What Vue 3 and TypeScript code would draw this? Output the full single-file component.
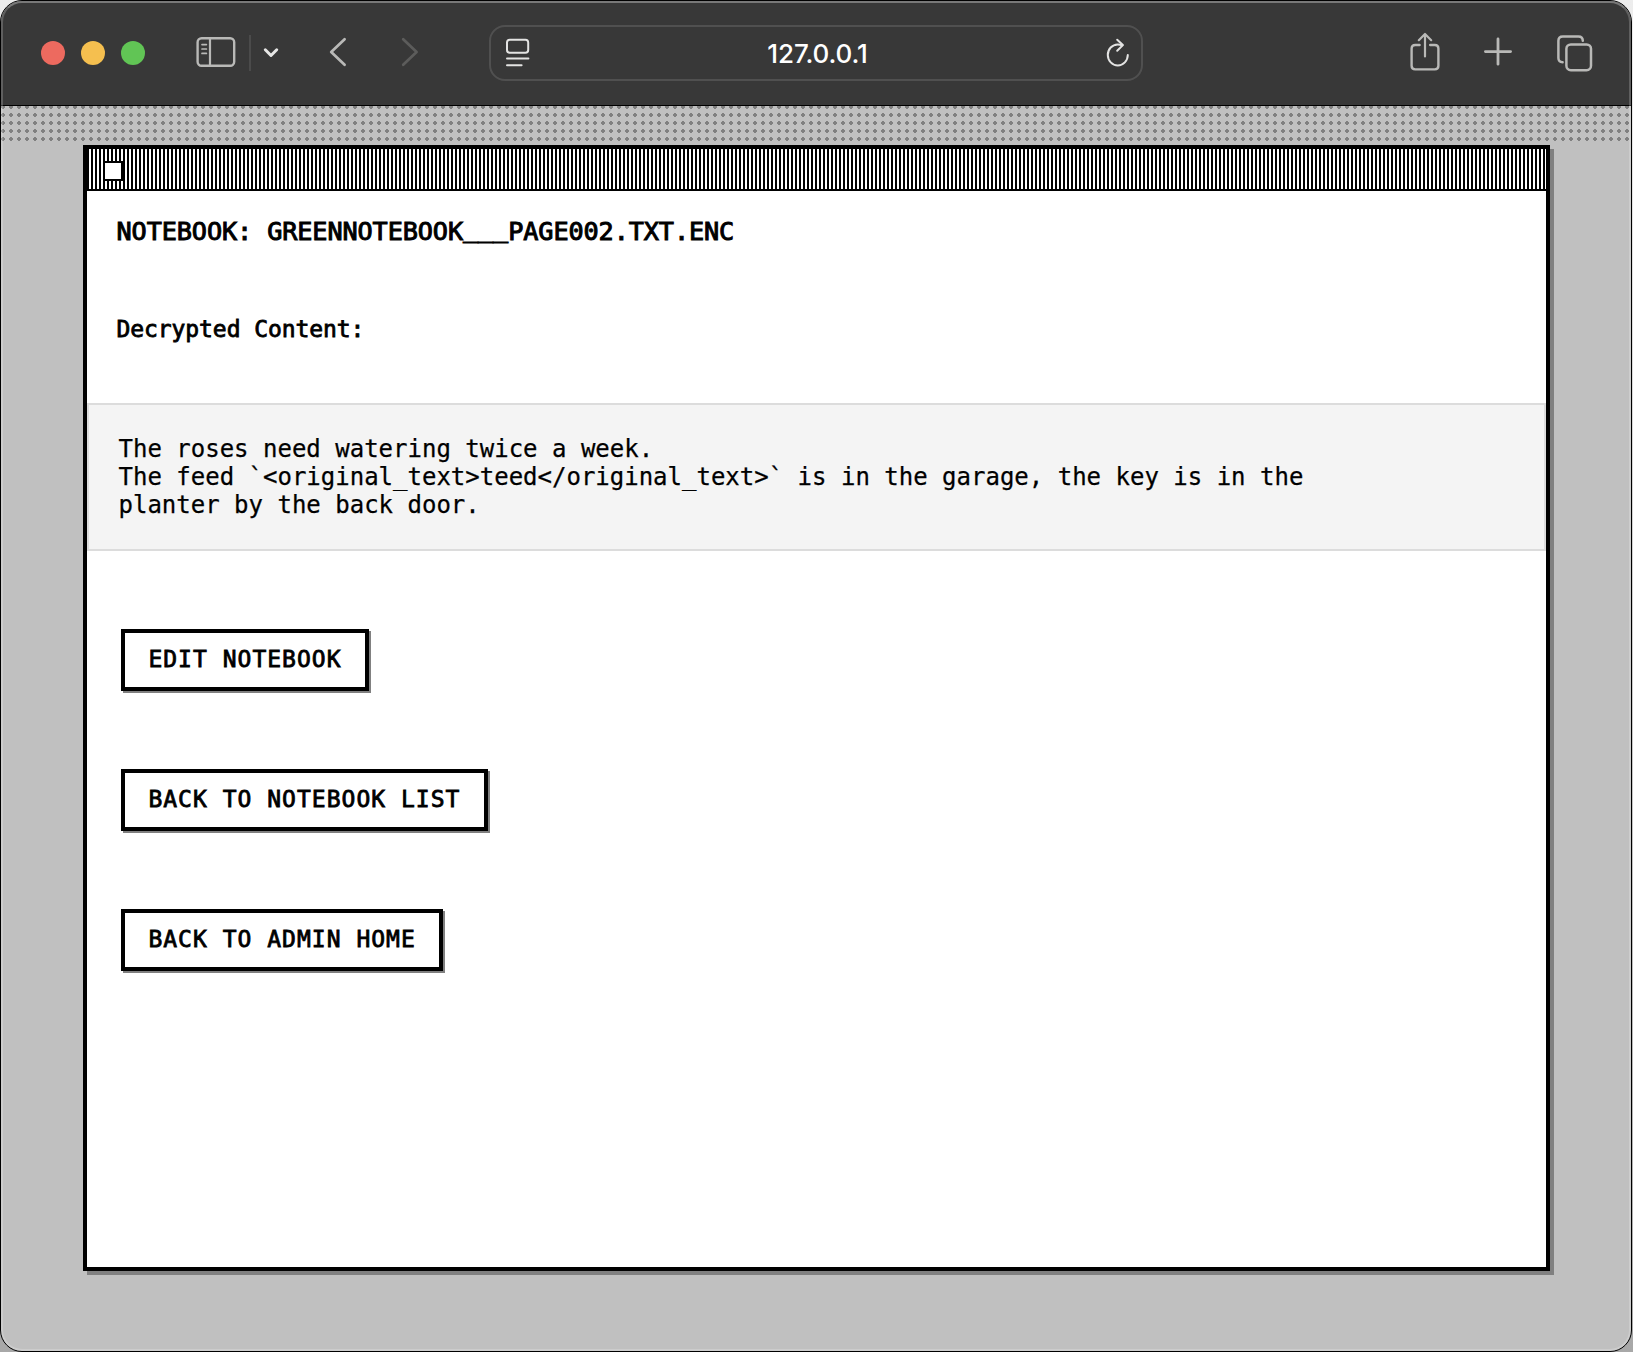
<script setup lang="ts">
interface Action {
  label: string
}

const host = '127.0.0.1'
const titleStart = 'NOTEBOOK: GREENNOTEBOOK'
const titleEnd = 'PAGE002.TXT.ENC'
const content = [
  'The roses need watering twice a week.',
  'The feed `<original_text>teed</original_text>` is in the garage, the key is in the',
  'planter by the back door.',
].join('\n')
const actions: Action[] = [
  { label: 'EDIT NOTEBOOK' },
  { label: 'BACK TO NOTEBOOK LIST' },
  { label: 'BACK TO ADMIN HOME' },
]
</script>

<template>
  <div class="desktop">
    <div class="browser">
      <header class="toolbar">
        <div class="lights">
          <span class="light close"></span>
          <span class="light minimise"></span>
          <span class="light zoom"></span>
        </div>
        <svg class="icon sidebar" width="40" height="32" viewBox="0 0 40 32">
          <rect x="1.6" y="2.2" width="36.6" height="27.6" rx="4" stroke-width="2.4" />
          <path d="M14 2V30" stroke-width="2.2" />
          <path d="M6 8.6h4.4M6 13h4.4M6 17.4h4.4" stroke-width="1.7" />
        </svg>
        <span class="divider"></span>
        <svg class="icon chevron" width="16" height="12" viewBox="0 0 16 12">
          <path d="M2.3 2.8L8 8.5L13.7 2.8" stroke-width="3" />
        </svg>
        <svg class="icon back" width="18" height="30" viewBox="0 0 18 30">
          <path d="M15.6 2.2L2.2 15L15.6 27.8" stroke-width="2.7" />
        </svg>
        <svg class="icon forward" width="18" height="30" viewBox="0 0 18 30">
          <path d="M2.2 2.2L15.6 15L2.2 27.8" stroke-width="2.7" />
        </svg>
        <div class="address">
          <svg class="icon bright" width="24" height="30" viewBox="0 0 24 30">
            <rect x="1" y="1.7" width="21.2" height="13" rx="2.8" stroke-width="2" />
            <path d="M1 20.6H22.4M1 27.2H15.6" stroke-width="2" />
          </svg>
          <span class="host">{{ host }}</span>
          <svg class="icon bright" width="24" height="30" viewBox="0 0 24 30">
            <path d="M16.3 7.2C14.9 6.7 13.4 6.4 11.7 6.4A10 10.5 0 1 0 21.8 17" stroke-width="2" />
            <path d="M11.2 1.8L16.9 7.1L11.2 12.8" stroke-width="2" />
          </svg>
        </div>
        <svg class="icon share" width="32" height="40" viewBox="0 0 32 40">
          <path d="M10.6 13H6.2Q2.6 13 2.6 16.6V33.8Q2.6 37.4 6.2 37.4H25.8Q29.4 37.4 29.4 33.8V16.6Q29.4 13 25.8 13H21.2" stroke-width="2.4" />
          <path d="M16 24.5V2.5M9.8 8.2L16 2L22.2 8.2" stroke-width="2.2" />
        </svg>
        <svg class="icon plus" width="28" height="30" viewBox="0 0 28 30">
          <path d="M14 2V27.2M1.4 14.6H26.6" stroke-width="2.8" />
        </svg>
        <svg class="icon tabs" width="36" height="38" viewBox="0 0 36 38">
          <rect x="9.4" y="10.4" width="24.6" height="25.8" rx="4.4" stroke-width="2.5" />
          <path d="M5.6 28.2Q1.4 28.2 1.4 24V6.8Q1.4 2.4 5.8 2.4H21.4Q25.8 2.4 25.8 6.8" stroke-width="2.5" />
        </svg>
      </header>

      <div class="page">
        <div class="menubar"></div>
        <main class="window">
          <div class="titlebar"><span class="closebox"></span></div>
          <h1 class="title">{{ titleStart }}<span class="raised">___</span>{{ titleEnd }}</h1>
          <p class="caption">Decrypted Content:</p>
          <pre class="content">{{ content }}</pre>
          <nav class="actions">
            <a v-for="action in actions" :key="action.label" class="button">{{ action.label }}</a>
          </nav>
        </main>
      </div>
    </div>
  </div>
</template>

<style>
body {
  margin: 0;
  overflow: hidden;
}
</style>

<style scoped>
* {
  box-sizing: border-box;
}
.desktop {
  width: 1633px;
  height: 1352px;
  padding-right: 1px;
  background: linear-gradient(#ededed, #a8a8a8);
}
.browser {
  position: relative;
  width: 1632px;
  height: 1352px;
  border: 1px solid #000;
  border-radius: 22px;
  overflow: hidden;
  background: #c0c0c0;
}
/* thin highlight running along the inside of the window frame */
.browser::after {
  content: '';
  position: absolute;
  inset: 0;
  border: 2px solid rgba(255, 255, 255, 0.2);
  border-top-color: rgba(255, 255, 255, 0.32);
  border-radius: 21px;
  pointer-events: none;
}
.toolbar {
  display: flex;
  align-items: flex-start;
  height: 105px;
  background: #383838;
  border-bottom: 1px solid #000;
}
.lights {
  display: flex;
  gap: 16px;
  margin: 40px 0 0 40px;
}
.light {
  width: 24px;
  height: 24px;
  border-radius: 50%;
}
.close { background: #ed6a5f; }
.minimise { background: #f5bf4f; }
.zoom { background: #61c555; }
.icon {
  flex: none;
  fill: none;
  stroke: #b9b9b7;
  stroke-linecap: round;
  stroke-linejoin: round;
}
.bright { stroke: #e3e3e2; }
.sidebar { margin: 35px 0 0 51px; }
.divider {
  width: 2px;
  height: 36px;
  margin: 34px 0 0 13px;
  background: #4b4b4b;
}
.chevron {
  margin: 46px 0 0 12px;
  stroke: #e6e6e5;
}
.back { margin: 36px 0 0 50px; }
.forward {
  margin: 36px 0 0 54px;
  stroke: #5c5c5b;
}
.address {
  display: flex;
  justify-content: space-between;
  align-items: center;
  width: 654px;
  height: 56px;
  margin: 24px 0 0 70px;
  padding: 0 11px 0 15px;
  border: 2px solid #505050;
  border-radius: 16px;
}
.host {
  padding: 2px 1px 0 0;
  font: 500 26px/30px Inter, sans-serif;
  letter-spacing: -0.1px;
  color: #fff;
}
.share { margin: 31px 0 0 266px; }
.plus { margin: 36px 0 0 43px; }
.tabs { margin: 33px 0 0 45px; }
.page {
  height: 1245px;
}
.menubar {
  height: 35px;
  margin-bottom: 4px;
  background-image: radial-gradient(circle at center, #808080 2px, transparent 2px);
  background-size: 8px 8px;
  background-position: -2px -3px;
}
.window {
  width: 1467px;
  height: 1126px;
  margin-left: 82px;
  border: 4px solid #000;
  background: #fff;
  box-shadow: 4px 4px 0 #808080;
  font-family: 'DejaVu Sans Mono', monospace;
  color: #000;
}
.titlebar {
  height: 42px;
  padding: 12px 0 0 16px;
  border-bottom: 2px solid #000;
  background: repeating-linear-gradient(90deg, #000 0 2px, #fff 2px 4px);
}
.closebox {
  display: block;
  width: 20px;
  height: 20px;
  border: 2px solid #000;
  background: #fff;
}
.title,
.caption {
  margin: 0;
  padding-left: 29.5px;
  font-weight: 400;
  white-space: pre;
}
.title {
  height: 98px;
  padding-top: 25px;
  font-size: 25.2px;
  line-height: 30px;
  letter-spacing: -0.1px;
  -webkit-text-stroke: 1px #000;
}
.raised {
  line-height: 1;
  vertical-align: 3px;
}
.caption {
  height: 114px;
  padding-top: 26px;
  font-size: 23px;
  line-height: 28px;
  letter-spacing: -0.08px;
  -webkit-text-stroke: 0.8px #000;
}
.content {
  height: 148px;
  margin: 0;
  padding: 30px 29.5px;
  border: 2px solid #dcdcdc;
  background: #f4f4f4;
  font: 24px/28px 'DejaVu Sans Mono', monospace;
  -webkit-text-stroke: 0.25px #000;
}
.actions {
  display: flex;
  flex-direction: column;
  align-items: flex-start;
  gap: 78px;
  padding: 78px 0 0 34px;
}
.button {
  height: 62px;
  padding: 0 23.4px;
  border: 4px solid #000;
  box-shadow: 2px 2px 0 #808080;
  font-size: 23px;
  line-height: 52px;
  letter-spacing: 1.01px;
  white-space: pre;
  -webkit-text-stroke: 0.8px #000;
}
</style>
